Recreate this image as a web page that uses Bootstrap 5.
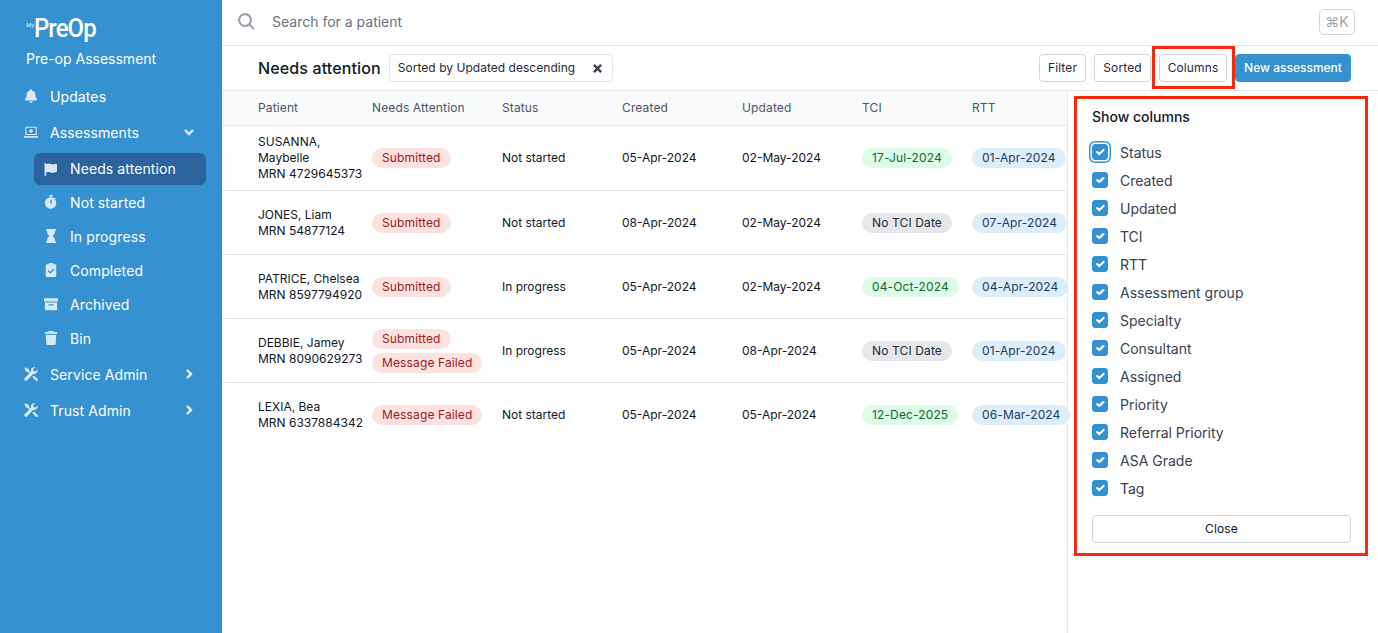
<!DOCTYPE html>
<html lang="en"><head><meta charset="utf-8"><title>PreOp</title>
<link href="https://cdn.jsdelivr.net/npm/bootstrap@5.3.0/dist/css/bootstrap.min.css" rel="stylesheet">
<style>
html,body{height:100%;overflow:hidden}
body{font-family:Inter,"Liberation Sans",sans-serif;font-size:12px;color:#111827;background:#fff}
.app{height:633px;position:relative}
.side{width:222px;flex:none;background:#3691d1;color:#fff}
.logo{padding:16px 0 0 26px;height:44px;line-height:1}
.logo-my{font-family:Roboto,sans-serif;font-size:6px;vertical-align:10px;opacity:.9}
.logo-name{font-family:Roboto,sans-serif;font-weight:500;font-size:25px;letter-spacing:-1px;display:inline-block;transform:scaleX(.96);transform-origin:left}
.brand-sub{font-size:14px;font-weight:400;padding:7px 0 0 26px;line-height:16px;margin-bottom:11px}
.sitem{display:flex;align-items:center;height:36px;padding:0 28px 0 24px;font-size:14px;font-weight:400;letter-spacing:.1px;color:#fff;text-decoration:none}
.sitem svg.ic{width:14px;height:14px;margin-right:12px;fill:#d7e9f6;flex:none}
.sitem .chev{margin-left:auto;width:10px;height:10px;fill:none;stroke:#e6f2fa;stroke-width:2.4}
.sub{height:34px;margin-left:34px;margin-right:16px;padding:0 0 0 10px;border-radius:6px}
.sub.on{height:32px;margin-top:3px;padding-bottom:1px;background:#2a639e}
.sub.last{margin-bottom:1px}
.topbar{height:46px;border-bottom:1px solid #e5e7eb;padding:0 23px 2px 16px}
.topbar svg{width:17px;height:17px;fill:#9ca3af;margin-right:17px}
.search{font-size:14px;color:#6b7280}
.kbd-box{width:36px;height:26px;border:1px solid #d1d5db;border-radius:5px;font-size:14px;color:#9ca3af;display:flex;align-items:center;justify-content:center}
.toolbar{height:45px;border-bottom:1px solid #e5e7eb;padding:0 27px 0 36px}
.title{font-size:16px;font-weight:500;color:#111827;margin-right:8px;letter-spacing:.13px}
.chip{width:224px;height:28px;border:1px solid #e5e7eb;border-radius:4px;padding:0 10px 0 8px;font-size:12px;letter-spacing:.03px;color:#1f2937}
.chip svg{width:9px;height:9px;stroke:#374151;stroke-width:2.6;fill:none}
.tbtn{height:28px;padding:0;font-size:12px;font-weight:400;letter-spacing:.12px;line-height:26px;border:1px solid #d1d5db;border-radius:4px;background:#fff;color:#1f2937}
.tbtn:hover{background:#fff}
.tbtn.prim{border-color:#3691d1;background:#3691d1;color:#fff;font-weight:500;letter-spacing:0}
.b1{width:47px}.b2{width:57px}.b3{width:68px}.b4{width:116px}
.gap8{gap:8px}
.tablewrap{width:846px;flex:none;border-right:1px solid #e5e7eb}
table.data{table-layout:fixed;width:845px;margin:0;font-size:12px;border-collapse:separate;border-spacing:0}
table.data th{height:35px;padding:0;background:#f9fafb;font-weight:400;letter-spacing:.13px;color:#4b5563;border-bottom:1px solid #e5e7eb;vertical-align:middle}
table.data td{height:64px;padding:0;color:#111827;border-bottom:1px solid #e5e7eb;vertical-align:middle;line-height:16px}
table.data tr.tall td{height:65px}
table.data tr:last-child td{border-bottom:0}
table.data th:first-child,table.data td:first-child{padding-left:36px}
.pill{display:inline-block;height:20px;line-height:20px;padding:0 10px;border-radius:10px;font-weight:400;letter-spacing:.13px;white-space:nowrap}
.p-red{background:#fee2e2;color:#991b1b}
.p-green{background:#dcfce7;color:#166534}
.p-gray{background:#e5e7eb;color:#1f2937}
.p-blue{background:#dbeefa;color:#1e3a5f}
.stack{display:flex;flex-direction:column;align-items:flex-start;gap:4px}
.panel{flex:1;padding:17px 27px 0 24px}
.ptitle{font-size:14px;font-weight:500;line-height:17px;margin-bottom:13px}
.citem{display:flex;align-items:center;height:28px;margin:0;font-size:14px;color:#374151;margin-left:0}
.citem .form-check-input{width:16px;height:16px;margin:0 12px 0 0;flex:none;border-radius:3px;background-color:#3691d1;border-color:#3691d1}
.citem .form-check-input.focusring{box-shadow:0 0 0 1.500px #fff,0 0 0 3px #3691d1}
.closebtn{height:28px;width:259px;margin-top:13px;padding:0;font-size:12px;font-weight:400;letter-spacing:.12px;border:1px solid #d1d5db;border-radius:4px;background:#fff;color:#111827;display:block}
.callout{position:absolute;border:3px solid #f52a0c;pointer-events:none}
.c1{left:1152px;top:46px;width:83px;height:43px}
.c2{left:1074px;top:96px;width:294px;height:460px}
</style></head><body>
<div class="app d-flex">
<aside class="side">
 <div class="logo"><span class="logo-my">My</span><span class="logo-name">PreOp</span></div>
 <div class="brand-sub">Pre-op Assessment</div>
 <a class="sitem"><svg class="ic" viewBox="0 0 16 16"><path d="M8 0a1 1 0 0 1 1 1v.7A5 5 0 0 1 13 6.600c0 3.400 1.800 4.600 2 5.200.2.600-.2 1.200-.9 1.200H1.900c-.7 0-1.100-.6-.9-1.200.2-.6 2-1.800 2-5.200A5 5 0 0 1 7 1.700V1a1 1 0 0 1 1-1zM6 14h4a2 2 0 0 1-4 0z"/></svg>Updates</a>
 <a class="sitem"><svg class="ic" viewBox="0 0 16 16"><path fill-rule="evenodd" d="M2.500 2h11a1 1 0 0 1 1 1V11.500h-13V3a1 1 0 0 1 1-1zm.2 1.200V10.300h10.600V3.200zM7.200 4.500h1.600v1.500H10.300v1.500H8.800V9H7.200V7.500H5.700V6h1.500zM0 12.500h16v.5c0 .8-.7 1.500-1.500 1.500h-13C.7 14.500 0 13.800 0 13z"/></svg>Assessments<svg class="chev" viewBox="0 0 10 10"><path d="M1 3l4 4 4-4"/></svg></a>
 <a class="sitem sub on"><svg class="ic" viewBox="0 0 16 16"><path d="M1.500 1c.5 0 .9.400.9.900V2.500c1-.4 2-.7 3-.7 2 0 3 1 5 1 1.100 0 2.400-.3 3.400-.8.400-.2 1 .1 1 .6v7.800c0 .3-.1.500-.4.700-1.200.8-2.700 1.200-4.200 1.200-2 0-3.100-1-5-1-1.100 0-2.200.3-2.700.5V15.100c0 .5-.4.900-.9.900s-1-.4-1-.9V1.900c0-.5.500-.9 1-.9z"/></svg>Needs attention</a>
 <a class="sitem sub"><svg class="ic" viewBox="0 0 16 16"><path fill-rule="evenodd" d="M6 0h4v1.500H8.800v1.100c1.100.2 2 .6 2.800 1.300l.9-.9 1 1-.9 1A6.500 6.500 0 1 1 7.200 2.600V1.500H6zM7.200 5.500v4.300h1.600V5.500z"/></svg>Not started</a>
 <a class="sitem sub"><svg class="ic" viewBox="0 0 16 16"><path d="M2.500 0h11v2.200h-.9c0 2.700-1.300 4.800-3 5.800 1.700 1 3 3.100 3 5.800h.9V16h-11v-2.200h.9c0-2.700 1.300-4.800 3-5.800-1.700-1-3-3.100-3-5.800h-.9z"/></svg>In progress</a>
 <a class="sitem sub"><svg class="ic" viewBox="0 0 16 16"><path fill-rule="evenodd" d="M6 0h4c.4.300.7.700.8 1.300h1.700c.8 0 1.500.7 1.500 1.500v11.700c0 .8-.7 1.500-1.500 1.500h-9c-.8 0-1.500-.7-1.500-1.500V2.800c0-.8.700-1.500 1.500-1.500h1.700C5.300.7 5.600.3 6 0zM11 6.300l-3.800 3.800L5.300 8.300l-1 1 2.900 2.900 4.800-4.800z"/></svg>Completed</a>
 <a class="sitem sub"><svg class="ic" viewBox="0 0 16 16"><path fill-rule="evenodd" d="M0 1.500h16v3.600H0zM1 6.200h14V14c0 .6-.5 1-1 1H2c-.5 0-1-.4-1-1zm4.200 2v1.400h5.600V8.200z"/></svg>Archived</a>
 <a class="sitem sub last"><svg class="ic" viewBox="0 0 16 16"><path d="M5.500 0h5l.6 1.200H15v2H1v-2h3.900zM2 4.300h12l-.7 10.500c0 .7-.6 1.200-1.300 1.200H4c-.7 0-1.300-.5-1.300-1.200z"/></svg>Bin</a>
 <a class="sitem"><svg class="ic" viewBox="0 0 16 16"><path d="M.5 1.800 2 .4l3.700 2.400v1.600l3 3-1.200 1.200-3-3H2.900zM11.800.1a4 4 0 0 1 .9.1L10.500 2.400l.4 2.300 2.300.4 2.200-2.200A4.100 4.100 0 0 1 10.500 8L3.500 15.200a1.800 1.800 0 0 1-2.600-2.600L8 5.500A4.100 4.100 0 0 1 11.800.1zM11 9.700l4.700 4.100a1.500 1.500 0 0 1-.1 1.800 1.500 1.500 0 0 1-1.900.1L9.400 11.300z"/></svg>Service Admin<svg class="chev" viewBox="0 0 10 10"><path d="M3 1l4 4-4 4"/></svg></a>
 <a class="sitem"><svg class="ic" viewBox="0 0 16 16"><path d="M.5 1.800 2 .4l3.700 2.400v1.600l3 3-1.200 1.200-3-3H2.900zM11.800.1a4 4 0 0 1 .9.1L10.500 2.400l.4 2.300 2.300.4 2.200-2.200A4.100 4.100 0 0 1 10.500 8L3.500 15.200a1.800 1.800 0 0 1-2.600-2.600L8 5.500A4.100 4.100 0 0 1 11.800.1zM11 9.700l4.700 4.100a1.500 1.500 0 0 1-.1 1.800 1.500 1.500 0 0 1-1.900.1L9.400 11.300z"/></svg>Trust Admin<svg class="chev" viewBox="0 0 10 10"><path d="M3 1l4 4-4 4"/></svg></a>
</aside>
<main class="flex-grow-1 d-flex flex-column" style="min-width:0">
 <div class="topbar d-flex align-items-center">
  <svg viewBox="0 0 17 17"><path fill-rule="evenodd" d="M7 0a7 7 0 0 1 5.600 11.200l4 4-1.500 1.500-4-4A7 7 0 1 1 7 0zm0 2.200a4.800 4.800 0 1 0 0 9.600 4.800 4.800 0 0 0 0-9.600z"/></svg>
  <span class="search">Search for a patient</span>
  <span class="kbd-box ms-auto">⌘K</span>
 </div>
 <div class="toolbar d-flex align-items-center">
  <span class="title">Needs attention</span>
  <span class="chip d-flex align-items-center justify-content-between">Sorted by Updated descending<svg viewBox="0 0 10 10"><path d="M1 1l8 8M9 1l-8 8"/></svg></span>
  <div class="ms-auto d-flex gap8">
   <button class="btn tbtn b1">Filter</button><button class="btn tbtn b2">Sorted</button><button class="btn tbtn b3">Columns</button><button class="btn tbtn prim b4">New assessment</button>
  </div>
 </div>
 <div class="d-flex flex-grow-1">
  <div class="tablewrap">
   <table class="data">
    <colgroup><col style="width:150px"><col style="width:130px"><col style="width:120px"><col style="width:120px"><col style="width:120px"><col style="width:110px"><col></colgroup>
    <thead><tr><th>Patient</th><th>Needs Attention</th><th>Status</th><th>Created</th><th>Updated</th><th>TCI</th><th>RTT</th></tr></thead>
    <tbody>
     <tr class="tall"><td>SUSANNA,<br>Maybelle<br>MRN 4729645373</td><td><span class="pill p-red">Submitted</span></td><td>Not started</td><td>05-Apr-2024</td><td>02-May-2024</td><td><span class="pill p-green">17-Jul-2024</span></td><td><span class="pill p-blue">01-Apr-2024</span></td></tr>
     <tr><td>JONES, Liam<br>MRN 54877124</td><td><span class="pill p-red">Submitted</span></td><td>Not started</td><td>08-Apr-2024</td><td>02-May-2024</td><td><span class="pill p-gray">No TCI Date</span></td><td><span class="pill p-blue">07-Apr-2024</span></td></tr>
     <tr><td>PATRICE, Chelsea<br>MRN 8597794920</td><td><span class="pill p-red">Submitted</span></td><td>In progress</td><td>05-Apr-2024</td><td>02-May-2024</td><td><span class="pill p-green">04-Oct-2024</span></td><td><span class="pill p-blue">04-Apr-2024</span></td></tr>
     <tr><td>DEBBIE, Jamey<br>MRN 8090629273</td><td><div class="stack"><span class="pill p-red">Submitted</span><span class="pill p-red">Message Failed</span></div></td><td>In progress</td><td>05-Apr-2024</td><td>08-Apr-2024</td><td><span class="pill p-gray">No TCI Date</span></td><td><span class="pill p-blue">01-Apr-2024</span></td></tr>
     <tr><td>LEXIA, Bea<br>MRN 6337884342</td><td><span class="pill p-red">Message Failed</span></td><td>Not started</td><td>05-Apr-2024</td><td>05-Apr-2024</td><td><span class="pill p-green">12-Dec-2025</span></td><td><span class="pill p-blue">06-Mar-2024</span></td></tr>
    </tbody>
   </table>
  </div>
  <div class="panel">
   <div class="ptitle">Show columns</div>
   <label class="citem"><input class="form-check-input focusring" type="checkbox" checked>Status</label>
   <label class="citem"><input class="form-check-input" type="checkbox" checked>Created</label>
   <label class="citem"><input class="form-check-input" type="checkbox" checked>Updated</label>
   <label class="citem"><input class="form-check-input" type="checkbox" checked>TCI</label>
   <label class="citem"><input class="form-check-input" type="checkbox" checked>RTT</label>
   <label class="citem"><input class="form-check-input" type="checkbox" checked>Assessment group</label>
   <label class="citem"><input class="form-check-input" type="checkbox" checked>Specialty</label>
   <label class="citem"><input class="form-check-input" type="checkbox" checked>Consultant</label>
   <label class="citem"><input class="form-check-input" type="checkbox" checked>Assigned</label>
   <label class="citem"><input class="form-check-input" type="checkbox" checked>Priority</label>
   <label class="citem"><input class="form-check-input" type="checkbox" checked>Referral Priority</label>
   <label class="citem"><input class="form-check-input" type="checkbox" checked>ASA Grade</label>
   <label class="citem"><input class="form-check-input" type="checkbox" checked>Tag</label>
   <button class="btn closebtn">Close</button>
  </div>
 </div>
</main>
<div class="callout c1"></div>
<div class="callout c2"></div>
</div>
<script src="https://cdn.jsdelivr.net/npm/bootstrap@5.3.0/dist/js/bootstrap.bundle.min.js"></script>
</body></html>
